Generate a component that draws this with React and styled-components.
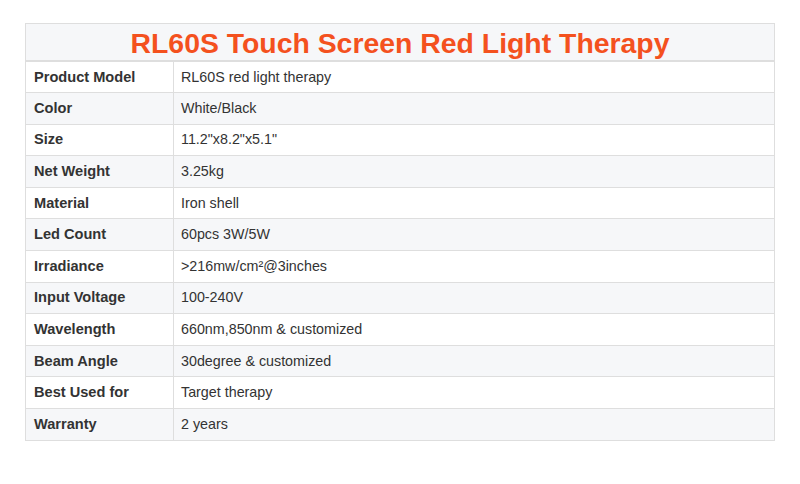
import styled, { createGlobalStyle } from "styled-components";

const GlobalStyle = createGlobalStyle`
  body {
    margin: 0;
    background: #ffffff;
    font-family: "Liberation Sans", Arial, sans-serif;
  }
`;

const Page = styled.div`
  padding: 23px 25px;
`;

const Table = styled.table`
  width: 750px;
  border-collapse: collapse;
  table-layout: fixed;
  border: 1px solid #dedede;
`;

const TitleCell = styled.th`
  height: 33px;
  padding: 3px 0 0;
  background: #f6f7f9;
  border: 1px solid #dedede;
  border-bottom-width: 2px;
  color: #f4511e;
  font-size: 28.4px;
  line-height: 33px;
  font-weight: 700;
  text-align: center;
  vertical-align: middle;
`;

const Row = styled.tr`
  height: 31.6px;
  background: ${({ $shade }) => ($shade ? "#f6f7f9" : "#ffffff")};
`;

const Label = styled.td`
  padding: 0 8px 1px;
  border: 1px solid #dedede;
  color: #333333;
  font-size: 14.6px;
  line-height: 18px;
  font-weight: 700;
  vertical-align: middle;
`;

const Value = styled.td`
  padding: 0 7px 1px;
  border: 1px solid #dedede;
  color: #333333;
  font-size: 14.3px;
  line-height: 18px;
  vertical-align: middle;
`;

const specs = [
  ["Product Model", "RL60S red light therapy"],
  ["Color", "White/Black"],
  ["Size", "11.2\"x8.2\"x5.1\""],
  ["Net Weight", "3.25kg"],
  ["Material", "Iron shell"],
  ["Led Count", "60pcs 3W/5W"],
  ["Irradiance", ">216mw/cm²@3inches"],
  ["Input Voltage", "100-240V"],
  ["Wavelength", "660nm,850nm & customized"],
  ["Beam Angle", "30degree & customized"],
  ["Best Used for", "Target therapy"],
  ["Warranty", "2 years"],
];

const App = () => {
  return (
    <Page>
      <GlobalStyle />
      <Table>
        <colgroup>
          <col style={{ width: 148 }} />
          <col />
        </colgroup>
        <thead>
          <tr>
            <TitleCell colSpan={2}>RL60S Touch Screen Red Light Therapy</TitleCell>
          </tr>
        </thead>
        <tbody>
          {specs.map(([label, value], i) => (
            <Row key={label} $shade={i % 2 === 1}>
              <Label>{label}</Label>
              <Value>{value}</Value>
            </Row>
          ))}
        </tbody>
      </Table>
    </Page>
  );
};

export default App;
